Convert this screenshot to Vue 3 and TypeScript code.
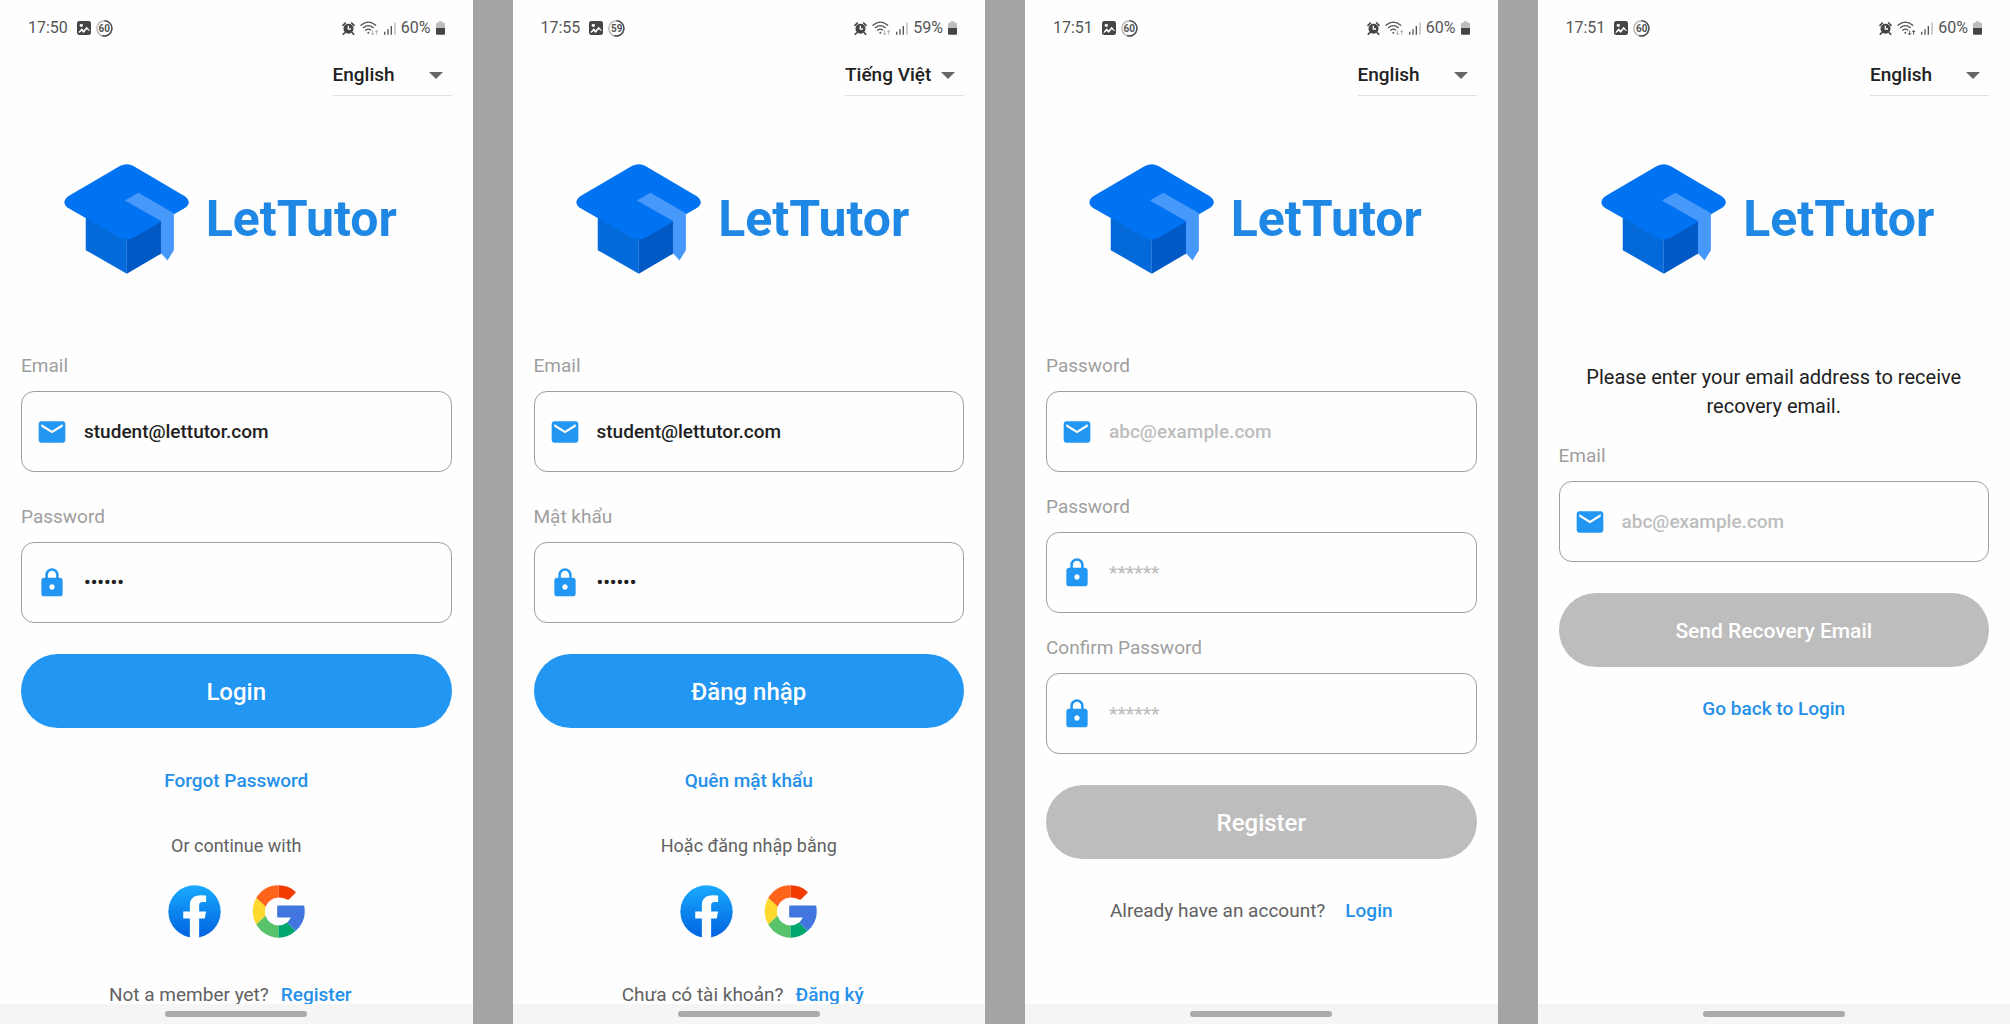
<script setup lang="ts">
interface Field {
  id: string
  label: string
  type: 'email' | 'password'
  value: string
  placeholder: string
}

interface Screen {
  id: string
  time: string
  battery: number
  wifiActive: boolean
  language: string
  message?: string
  spacing: 'wide' | 'tight'
  fields: Field[]
  submit: string
  disabled: boolean
  link?: string
  social?: string
  question?: string
  answer?: string
}

const languages = ['English', 'Tiếng Việt']

const email = (id: string, label: string, value = ''): Field => ({
  id, label, type: 'email', value, placeholder: 'abc@example.com',
})
const password = (id: string, label: string, value = ''): Field => ({
  id, label, type: 'password', value, placeholder: '******',
})

const screens: Screen[] = [
  {
    id: 'login', time: '17:50', battery: 60, wifiActive: false, language: 'English', spacing: 'wide',
    fields: [email('login-email', 'Email', 'student@lettutor.com'), password('login-password', 'Password', '123456')],
    submit: 'Login', disabled: false, link: 'Forgot Password',
    social: 'Or continue with', question: 'Not a member yet?', answer: 'Register',
  },
  {
    id: 'login-vi', time: '17:55', battery: 59, wifiActive: false, language: 'Tiếng Việt', spacing: 'wide',
    fields: [email('vi-email', 'Email', 'student@lettutor.com'), password('vi-password', 'Mật khẩu', '123456')],
    submit: 'Đăng nhập', disabled: false, link: 'Quên mật khẩu',
    social: 'Hoặc đăng nhập bằng', question: 'Chưa có tài khoản?', answer: 'Đăng ký',
  },
  {
    id: 'register', time: '17:51', battery: 60, wifiActive: false, language: 'English', spacing: 'tight',
    fields: [
      email('register-email', 'Password'),
      password('register-password', 'Password'),
      password('register-confirm', 'Confirm Password'),
    ],
    submit: 'Register', disabled: true, question: 'Already have an account?', answer: 'Login',
  },
  {
    id: 'recovery', time: '17:51', battery: 60, wifiActive: true, language: 'English', spacing: 'tight',
    message: 'Please enter your email address to receive recovery email.',
    fields: [email('recovery-email', 'Email')],
    submit: 'Send Recovery Email', disabled: true, link: 'Go back to Login',
  },
]
</script>

<template>
  <main class="board">
    <section v-for="s in screens" :key="s.id" class="phone" :class="s.id">
      <header class="status">
        <div class="status-group left">
          <span>{{ s.time }}</span>
          <svg width="14" height="14" viewBox="0 0 42 42" aria-hidden="true">
            <rect width="42" height="42" rx="7" fill="#454545" />
            <circle cx="13" cy="13" r="5" fill="#fdfdfd" />
            <path d="M5 32 L14 22 L20 28 L29 17 L38 28 V31 L29 25 L20 36 L14 30 L5 37Z" fill="#fdfdfd" />
          </svg>
          <span class="badge">
            <svg width="17" height="17" viewBox="0 0 51 51" aria-hidden="true">
              <circle cx="25.500" cy="25.500" r="23" fill="none" stroke="#b4b4b4" stroke-width="4" />
              <path d="M25 2 A23 23 0 1 1 18 47" fill="none" stroke="#454545" stroke-width="4" />
            </svg>
            <b>{{ s.battery }}</b>
          </span>
        </div>
        <div class="status-group right">
          <svg width="13" height="13" viewBox="0 0 39 39" aria-hidden="true">
            <circle cx="19.500" cy="20" r="15" fill="#454545" />
            <path d="M3 10 L10 3 M29 3 L36 10 M8 32 L4 37 M31 32 L35 37" stroke="#454545" stroke-width="5" stroke-linecap="round" />
            <path d="M19 11 V21 H27" fill="none" stroke="#fdfdfd" stroke-width="4" />
          </svg>
          <svg width="19" height="15" viewBox="0 0 57 45" aria-hidden="true">
            <g fill="none" stroke="#555" stroke-width="4" stroke-linecap="round">
              <path d="M3 13 Q25 -6 47 13" />
              <path d="M10 20 Q25 8 40 20" />
              <path d="M17 28 Q25 21 32 27" />
            </g>
            <circle cx="25" cy="35" r="3" fill="#555" />
            <path :stroke="s.wifiActive ? '#555' : '#b0b0b0'" d="M38 29 V41 M34 37 L38 42 L42 37 M50 41 V29 M46 33 L50 28 L54 33" fill="none" stroke-width="3" />
          </svg>
          <svg width="12" height="13" viewBox="0 0 36 39" aria-hidden="true">
            <path d="M2 29 V38 M12 22 V38 M22 12 V38" stroke="#555" stroke-width="4" />
            <path d="M33 2 V38" stroke="#b8b8b8" stroke-width="4" />
          </svg>
          <span>{{ s.battery }}%</span>
          <svg width="9" height="14" viewBox="0 0 27 42" aria-hidden="true">
            <path d="M8 1 H19 V5 H23 Q27 5 27 9 V22 H0 V9 Q0 5 4 5 H8Z" fill="#bcbcbc" />
            <path d="M0 21 H27 V38 Q27 41 24 41 H3 Q0 41 0 38Z" fill="#454545" />
          </svg>
        </div>
      </header>

      <div class="content">
        <div class="language">
          <select aria-label="Language" :value="s.language">
            <option v-for="l in languages" :key="l" :value="l">{{ l }}</option>
          </select>
          <svg width="14" height="7" viewBox="0 0 14 7" aria-hidden="true"><path d="M0 0H14L7 7Z" fill="#666" /></svg>
        </div>

        <div class="brand">
          <svg width="125" height="110" viewBox="0 0 376 332" aria-hidden="true">
            <path d="M65 150 L189 210 V331 L65 260Z" fill="#046ada" />
            <path d="M189 210 L300 160 V266 L189 331Z" fill="#0059c4" />
            <path d="M168 6 Q189 -4 209 6 L364 97 Q388 116 364 133 L210 222 Q189 234 168 222 L12 133 Q-11 116 12 97Z" fill="#0073f3" />
            <path d="M183 110 L224 87 L331 149 V260 L312 291 L292 269 V172Z" fill="#4798fb" />
          </svg>
          <h1>LetTutor</h1>
        </div>

        <form @submit.prevent>
          <p v-if="s.message" class="message">{{ s.message }}</p>
          <div class="fields" :class="s.spacing">
            <div v-for="f in s.fields" :key="f.id" class="field">
              <label :for="f.id">{{ f.label }}</label>
              <div class="box">
                <svg v-if="f.type === 'email'" width="32" height="32" viewBox="0 0 24 24" aria-hidden="true">
                  <path fill="#2196f3" d="M20 4H4c-1.100 0-2 .9-2 2v12c0 1.100.9 2 2 2h16c1.100 0 2-.9 2-2V6c0-1.100-.9-2-2-2zm0 4l-8 5-8-5V6l8 5 8-5v2z" />
                </svg>
                <svg v-else width="32" height="32" viewBox="0 0 24 24" aria-hidden="true">
                  <path fill="#2196f3" d="M18 8h-1V6c0-2.760-2.240-5-5-5S7 3.240 7 6v2H6c-1.100 0-2 .9-2 2v10c0 1.100.9 2 2 2h12c1.100 0 2-.9 2-2V10c0-1.100-.9-2-2-2zm-6 9c-1.100 0-2-.9-2-2s.9-2 2-2 2 .9 2 2-.9 2-2 2zm3.100-9H8.900V6c0-1.710 1.390-3.100 3.100-3.100s3.100 1.390 3.100 3.100v2z" />
                </svg>
                <input :id="f.id" :type="f.type" :value="f.value" :placeholder="f.placeholder" autocomplete="off" />
              </div>
            </div>
          </div>
          <button class="submit" type="submit" :disabled="s.disabled">{{ s.submit }}</button>
        </form>

        <a v-if="s.link" class="link" href="#">{{ s.link }}</a>

        <template v-if="s.social">
          <p class="social-title">{{ s.social }}</p>
          <div class="social">
            <button type="button" aria-label="Facebook">
              <svg width="53" height="53" viewBox="0 0 160 160">
                <defs>
                  <linearGradient :id="s.id + '-fb'" x1="0" y1="0" x2="0" y2="1">
                    <stop offset="0" stop-color="#19aaff" />
                    <stop offset="1" stop-color="#0062e0" />
                  </linearGradient>
                </defs>
                <circle cx="80" cy="80" r="79" :fill="'url(#' + s.id + '-fb)'" />
                <path d="M66 160 V101 H46 V80 H66 V62 C66 42 78 31 98 31 Q108 31 115 32 V51 H105 C96 51 94 56 94 62 V80 H115 L111 101 H94 V160Z" fill="#fefefe" />
              </svg>
            </button>
            <button type="button" aria-label="Google">
              <svg width="53" height="53" viewBox="0 0 160 160">
                <path d="M80 1 Q110 1 131 20 Q133 22 131 24 L112 43 Q109 46 106 44 Q95 38 80 38Z" fill="#f33b00" />
                <path d="M80 1 V38 A41 41 0 0 0 41 66 L13 39 A79 79 0 0 1 80 1Z" fill="#ff641a" />
                <path d="M13 39 L41 66 Q37 80 41 93 L13 119 A79 79 0 0 1 13 39Z" fill="#ffd92d" />
                <path d="M13 119 L41 93 A41 41 0 0 0 80 122 V159 A79 79 0 0 1 13 119Z" fill="#59c36a" />
                <path d="M80 159 V122 Q95 122 106 113 L132 138 Q110 159 80 159Z" fill="#00a66c" />
                <path d="M79 62 H154 Q158 62 158 66 Q165 109 132 138 L106 113 Q113 108 117 98 H79 Q76 98 76 95 V65 Q76 62 79 62Z" fill="#4175df" />
              </svg>
            </button>
          </div>
        </template>

        <p v-if="s.question" class="footer">
          <span>{{ s.question }}</span>
          <a href="#">{{ s.answer }}</a>
        </p>
      </div>

      <div class="navbar"><span class="handle"></span></div>
    </section>
  </main>
</template>

<style>
body {
  margin: 0;
  background: #a4a4a4;
}
</style>

<style scoped>
.board {
  display: grid;
  grid-template-columns: repeat(4, minmax(0, 1fr));
  gap: 40px;
  font-family: Roboto, 'Noto Sans', sans-serif;
  font-size: 19px;
  line-height: 22px;
  color: #212121;
}
.phone {
  display: flex;
  flex-direction: column;
  min-height: 100vh;
  background: #fefefe;
}
h1,
p {
  margin: 0;
}
a {
  color: #2590ea;
  font-weight: 500;
  text-decoration: none;
}
.status {
  display: flex;
  flex: none;
  justify-content: space-between;
  align-items: center;
  height: 56px;
  padding: 0 28px;
  font-size: 16px;
  color: #555;
}
.status-group {
  display: flex;
  align-items: center;
  gap: 5px;
}
.status-group.left > span:first-child {
  margin-right: 4px;
}
.badge {
  display: grid;
  place-items: center;
}
.badge > * {
  grid-area: 1 / 1;
}
.badge b {
  font-size: 10px;
  line-height: 17px;
}
.content {
  display: flex;
  flex: 1;
  flex-direction: column;
  align-items: center;
  padding: 0 21px;
}
.language {
  display: grid;
  align-items: center;
  align-self: flex-end;
  width: 119px;
  border-bottom: 1px solid #e0e0e0;
}
.language > * {
  grid-area: 1 / 1;
}
.language svg {
  justify-self: end;
  margin-right: 9px;
  pointer-events: none;
}
select {
  appearance: none;
  width: 100%;
  height: 39px;
  padding: 0 0 2px;
  border: 0;
  background: transparent;
  color: #212121;
  font: inherit;
  font-weight: 500;
}
.brand {
  display: flex;
  align-items: center;
  gap: 17px;
  padding: 68px 12px 81px 0;
}
h1 {
  font-size: 50px;
  line-height: 56px;
  font-weight: 700;
  color: #1f88e5;
}
form {
  width: 100%;
}
.message {
  padding: 8px 20px 24px;
  font-size: 20px;
  line-height: 29px;
  text-align: center;
}
.fields {
  display: flex;
  flex-direction: column;
}
.fields.wide {
  gap: 34px;
}
.fields.tight {
  gap: 24px;
}
.field {
  display: flex;
  flex-direction: column;
  gap: 14px;
}
label {
  color: #9e9e9e;
}
.box {
  display: flex;
  align-items: center;
  gap: 16px;
  box-sizing: border-box;
  height: 81px;
  padding: 0 14px;
  border: 1px solid #9e9e9e;
  border-radius: 13px;
}
input {
  flex: 1;
  min-width: 0;
  padding: 0;
  border: 0;
  outline: 0;
  background: transparent;
  color: #212121;
  font: inherit;
  font-weight: 500;
}
input::placeholder {
  color: #bdbdbd;
  opacity: 1;
}
button {
  padding: 0;
  border: 0;
  background: none;
  font: inherit;
}
.submit {
  display: block;
  width: 100%;
  height: 74px;
  margin-top: 31px;
  padding-top: 2px;
  border-radius: 37px;
  background: #2196f3;
  color: #fff;
  font-size: 24px;
  font-weight: 500;
}
.submit:disabled {
  background: #bdbdbd;
}
.recovery .submit {
  font-size: 21px;
}
.link {
  margin-top: 42px;
}
.recovery .link {
  margin-top: 31px;
}
.social-title {
  margin-top: 43px;
  font-size: 18px;
  color: #616161;
}
.social {
  display: flex;
  gap: 31px;
  margin-top: 28px;
}
.social svg {
  display: block;
}
.footer {
  display: flex;
  gap: 12px;
  margin-top: 48px;
  padding-right: 12px;
  line-height: 18px;
  color: #616161;
}
.register .footer {
  gap: 20px;
  margin-top: 43px;
  padding-right: 20px;
}
.navbar {
  display: flex;
  flex: none;
  justify-content: center;
  align-items: center;
  height: 20px;
  background: #f5f5f5;
}
.handle {
  width: 30%;
  height: 6px;
  border-radius: 3px;
  background: #aaa;
}
</style>
